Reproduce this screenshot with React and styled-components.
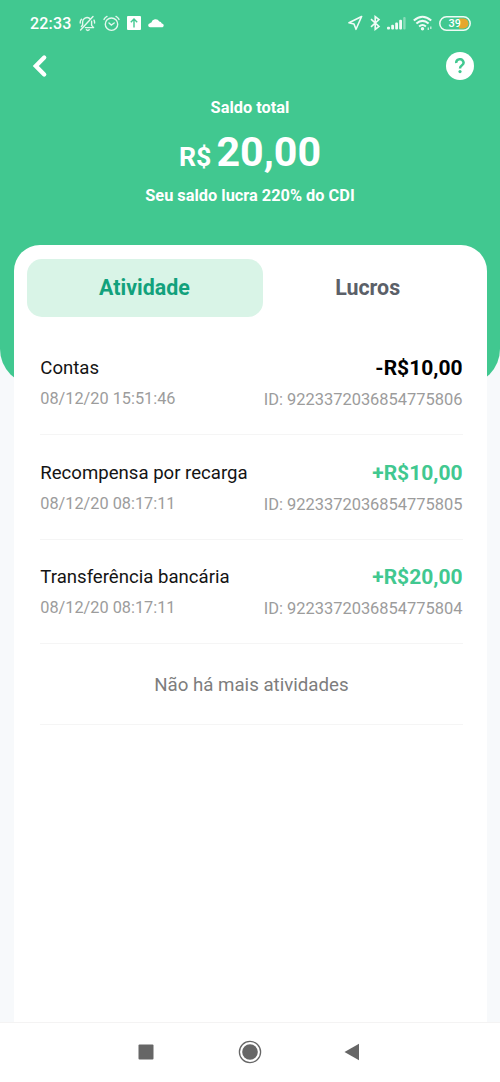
import React from 'react';
import styled, { createGlobalStyle } from 'styled-components';

const colors = {
    green: '#41c890',
    darkGreen: '#12a17c',
    paleGreen: '#d9f4e7',
    page: '#f7f9fb',
    line: '#f5f5f5',
    text: '#141414',
    grey: '#9c9c9c',
    nav: '#666666'
};

const GlobalStyle = createGlobalStyle`
    * {
        box-sizing: border-box;
    }
    body {
        margin: 0;
        background: ${colors.page};
        font-family: Roboto, "Liberation Sans", sans-serif;
    }
`;

const Screen = styled.div`
    display: flex;
    flex-direction: column;
    width: 500px;
    height: 1082px;
    overflow: hidden;
`;

const Header = styled.header`
    flex: none;
    height: 385px;
    background: ${colors.green};
    border-radius: 0 0 36px 36px;
    color: #fff;
`;

const StatusBar = styled.div`
    display: flex;
    align-items: center;
    justify-content: space-between;
    height: 46px;
    padding: 0 29px 0 30px;
    svg {
        display: block;
    }
`;

const StatusGroup = styled.div`
    display: flex;
    align-items: center;
    gap: ${({ $gap }) => $gap}px;
`;

const Clock = styled.span`
    width: 42px;
    font-size: 16px;
    font-weight: 500;
    letter-spacing: 0.2px;
    line-height: 20px;
    padding-top: 1px;
    white-space: nowrap;
`;

const TopBar = styled.div`
    display: flex;
    align-items: center;
    justify-content: space-between;
    height: 40px;
    padding: 0 26px 0 31px;
`;

const IconButton = styled.button`
    display: flex;
    padding: 0;
    border: 0;
    background: none;
    color: #fff;
`;

const HelpButton = styled(IconButton)`
    align-items: center;
    justify-content: center;
    width: 28px;
    height: 28px;
    border-radius: 50%;
    background: #fff;
    color: ${colors.green};
`;

const Balance = styled.div`
    display: flex;
    flex-direction: column;
    align-items: center;
    padding-top: 12px;
`;

const BalanceText = styled.span`
    font-size: 16.35px;
    font-weight: 700;
    line-height: 20px;
`;

const BalanceAmount = styled.div`
    display: flex;
    align-items: baseline;
    gap: 5px;
    height: 68px;
    font-size: 41.2px;
    font-weight: 700;
    line-height: 69px;
`;

const Currency = styled.span`
    font-size: 26.7px;
`;

const Card = styled.main`
    flex: 1;
    margin: -140px 13px 0 13.5px;
    padding: 13.5px 13.5px 0;
    border-radius: 26px 26px 0 0;
    background: #fff;
`;

const Tabs = styled.div`
    display: flex;
    height: 58.5px;
`;

const Tab = styled.button`
    flex: ${({ $active }) => ($active ? 1.12 : 1)};
    padding: 0 1px 0 0;
    border: 0;
    border-radius: 15px;
    background: ${({ $active }) => ($active ? colors.paleGreen : 'transparent')};
    color: ${({ $active }) => ($active ? colors.darkGreen : '#5b6068')};
    font-family: inherit;
    font-size: 21.4px;
    font-weight: 700;
`;

const List = styled.div`
    padding: 13.5px 11px 0 13.3px;
`;

const Row = styled.div`
    display: flex;
    justify-content: space-between;
    height: 104.5px;
    padding-top: 23.5px;
    border-bottom: 1px solid ${colors.line};
`;

const Column = styled.div`
    display: flex;
    flex-direction: column;
    align-items: ${({ $right }) => ($right ? 'flex-end' : 'flex-start')};
    gap: ${({ $right }) => ($right ? 8 : 7)}px;
`;

const Name = styled.span`
    color: ${colors.text};
    font-size: 18.6px;
    line-height: 28px;
`;

const Amount = styled.span`
    color: ${({ $income }) => ($income ? colors.green : '#000')};
    font-size: 21px;
    font-weight: 700;
    line-height: 28px;
`;

const Detail = styled.span`
    color: ${colors.grey};
    font-size: ${({ $small }) => ($small ? 16.3 : 16.45)}px;
    line-height: 20px;
`;

const Empty = styled.div`
    display: flex;
    align-items: center;
    justify-content: center;
    height: 80.5px;
    padding-top: 2px;
    border-bottom: 1px solid ${colors.line};
    color: #7d7d7d;
    font-size: 18.7px;
`;

const NavBar = styled.nav`
    display: flex;
    flex: none;
    align-items: center;
    justify-content: space-between;
    height: 60px;
    padding: 0 140px 2px 138px;
    border-top: 1px solid #f4f3f3;
    background: #fff;
`;

const ACTIVITIES = [
    { name: 'Contas', date: '08/12/20 15:51:46', amount: '-R$10,00', id: '9223372036854775806' },
    { name: 'Recompensa por recarga', date: '08/12/20 08:17:11', amount: '+R$10,00', id: '9223372036854775805' },
    { name: 'Transferência bancária', date: '08/12/20 08:17:11', amount: '+R$20,00', id: '9223372036854775804' }
];

const MutedIcon = () => (
    <svg width='17' height='17' viewBox='0 0 17 17' fill='none' stroke='#e4f8ee' strokeWidth='1.4' strokeLinecap='round' strokeLinejoin='round'>
        <path d='M3.6 10V7A4.4 4.4 0 0 1 10.6 3.4M12.6 6.2V10.4L14.6 12.6H6.4M7.4 14.8Q8.8 16 10.2 14.8M1.6 15 14 1.6M1.2 8Q1 5.6 2.4 4.2M15.6 8Q15.7 6.5 15 5.2M3.6 10 2.4 11.6' />
    </svg>
);

const AlarmIcon = () => (
    <svg width='17' height='17' viewBox='0 0 17 17' fill='none' stroke='#e4f8ee' strokeWidth='1.4' strokeLinecap='round'>
        <circle cx='8.5' cy='9.2' r='6.2' />
        <path d='M6 8 8.3 10 11.2 8M1 4.4Q2 2.4 4 1.4M16 4.4Q15 2.4 13 1.4' />
    </svg>
);

const UploadIcon = () => (
    <svg width='14' height='14' viewBox='0 0 14 14'>
        <rect width='14' height='14' rx='1' fill='#fff' />
        <path d='M7 11.5V3.5M3.8 6.2 7 3 10.2 6.2' fill='none' stroke={colors.green} strokeWidth='1.4' />
    </svg>
);

const CloudIcon = () => (
    <svg width='17' height='10' viewBox='0 0 17 10' fill='#fff'>
        <path d='M2.4 9.2A2 2 0 0 1 2 5.2Q2.6 4.6 3.4 4.6A4.3 4.3 0 0 1 11.3 3.4 3 3 0 0 1 13.8 5.4 2 2 0 0 1 14.6 9.2Z' />
    </svg>
);

const LocationIcon = () => (
    <svg width='15' height='16' viewBox='0 0 15 16' fill='none' stroke='#f0fbf6' strokeWidth='1.6' strokeLinejoin='round'>
        <path d='M13.6 1.5 1 7.8 6 9 8 14.3Z' />
    </svg>
);

const BluetoothIcon = () => (
    <svg width='11' height='16' viewBox='0 0 11 16' fill='none' stroke='#f0fbf6' strokeWidth='1.6'>
        <path d='M1 4.2 9 11.4 5.2 14.4V1.6L9 4.6 1 11.8' />
    </svg>
);

const SignalIcon = () => (
    <svg width='19' height='14' viewBox='0 0 19 14' fill='#f0fbf6'>
        <rect x='0' y='10.8' width='3' height='2.7' rx='1' />
        <rect x='4.2' y='8.8' width='2.8' height='4.7' rx='1' />
        <rect x='8.2' y='6.5' width='2.8' height='7' rx='1' />
        <rect x='12.2' y='3.8' width='2.8' height='9.7' rx='1' />
        <rect x='16.2' y='1' width='2.4' height='12.5' rx='1' opacity='0.4' />
    </svg>
);

const WifiIcon = () => (
    <svg width='20' height='16' viewBox='0 0 20 16' fill='none' stroke='#f0fbf6' strokeWidth='2'>
        <path d='M0.8 5.6Q9.5-2.2 18.2 5.6M3.4 8.6Q9.5 3.2 15.6 8.6M6.1 11.4Q9.5 8.6 12.9 11.4' />
        <circle cx='9.5' cy='13.7' r='1.7' fill='#f0fbf6' stroke='none' />
        <path d='M15.3 12.6V15M17.8 11.6V14' strokeWidth='1.4' opacity='0.75' />
    </svg>
);

const BatteryIcon = () => (
    <svg width='32' height='15' viewBox='0 0 32 15'>
        <path d='M20 2.5h4.5a5 5 0 0 1 0 10H20Z' fill='#e5a72e' />
        <rect x='0.8' y='0.8' width='30.4' height='13.4' rx='6.7' fill='none' stroke='#effbf5' strokeWidth='1.5' />
        <text x='15.8' y='11.4' fill='#fff' fontSize='11' fontWeight='500' textAnchor='middle'>39</text>
    </svg>
);

export default class App extends React.Component {
    constructor(props) {
        super(props);
        this.state = {
            tab: 'Atividade'
        }
    }

    activityRender(activity) {
        return (
            <Row key={activity.id}>
                <Column>
                    <Name>{activity.name}</Name>
                    <Detail $small>{activity.date}</Detail>
                </Column>
                <Column $right>
                    <Amount $income={activity.amount.startsWith('+')}>{activity.amount}</Amount>
                    <Detail>{`ID: ${activity.id}`}</Detail>
                </Column>
            </Row>
        )
    }

    render() {
        const { tab } = this.state;

        return (
            <Screen>
                <GlobalStyle />
                <Header>
                    <StatusBar>
                        <StatusGroup $gap={7}>
                            <Clock>22:33</Clock>
                            <MutedIcon />
                            <AlarmIcon />
                            <UploadIcon />
                            <CloudIcon />
                        </StatusGroup>
                        <StatusGroup $gap={6.5}>
                            <LocationIcon />
                            <BluetoothIcon />
                            <SignalIcon />
                            <WifiIcon />
                            <BatteryIcon />
                        </StatusGroup>
                    </StatusBar>
                    <TopBar>
                        <IconButton aria-label='Voltar'>
                            <svg width='18' height='24' viewBox='0 0 18 24' fill='none' stroke='#fff' strokeWidth='4.3' strokeLinecap='round'>
                                <path d='M13.2 3.5 4.8 12 13.2 20.5' />
                            </svg>
                        </IconButton>
                        <HelpButton aria-label='Ajuda'>
                            <svg width='12' height='16' viewBox='0 0 12 16' fill='none' stroke='currentColor' strokeWidth='2.5'>
                                <path d='M2.3 5A3.6 3.3 0 1 1 8 7.2Q6 8.5 6 10.4' />
                                <circle cx='6' cy='13.6' r='1.6' fill='currentColor' stroke='none' />
                            </svg>
                        </HelpButton>
                    </TopBar>
                    <Balance>
                        <BalanceText>Saldo total</BalanceText>
                        <BalanceAmount>
                            <Currency>R$</Currency>
                            <span>20,00</span>
                        </BalanceAmount>
                        <BalanceText>Seu saldo lucra 220% do CDI</BalanceText>
                    </Balance>
                </Header>
                <Card>
                    <Tabs>
                        {['Atividade', 'Lucros'].map(name => (
                            <Tab key={name} $active={tab === name} onClick={() => this.setState({ tab: name })}>{name}</Tab>
                        ))}
                    </Tabs>
                    <List>
                        {ACTIVITIES.map(activity => this.activityRender(activity))}
                        <Empty>Não há mais atividades</Empty>
                    </List>
                </Card>
                <NavBar>
                    <svg width='16' height='16' viewBox='0 0 16 16' fill={colors.nav}>
                        <rect x='0.5' y='0.5' width='15' height='15' rx='1' />
                    </svg>
                    <svg width='26' height='24' viewBox='0 0 26 24'>
                        <circle cx='14' cy='12' r='10.6' fill='none' stroke={colors.nav} strokeWidth='1.3' />
                        <circle cx='14' cy='12' r='7.8' fill={colors.nav} />
                    </svg>
                    <svg width='16' height='18' viewBox='0 0 16 18' fill={colors.nav}>
                        <path d='M15 0.8V17.2L0.5 9Z' />
                    </svg>
                </NavBar>
            </Screen>
        )
    }
}
